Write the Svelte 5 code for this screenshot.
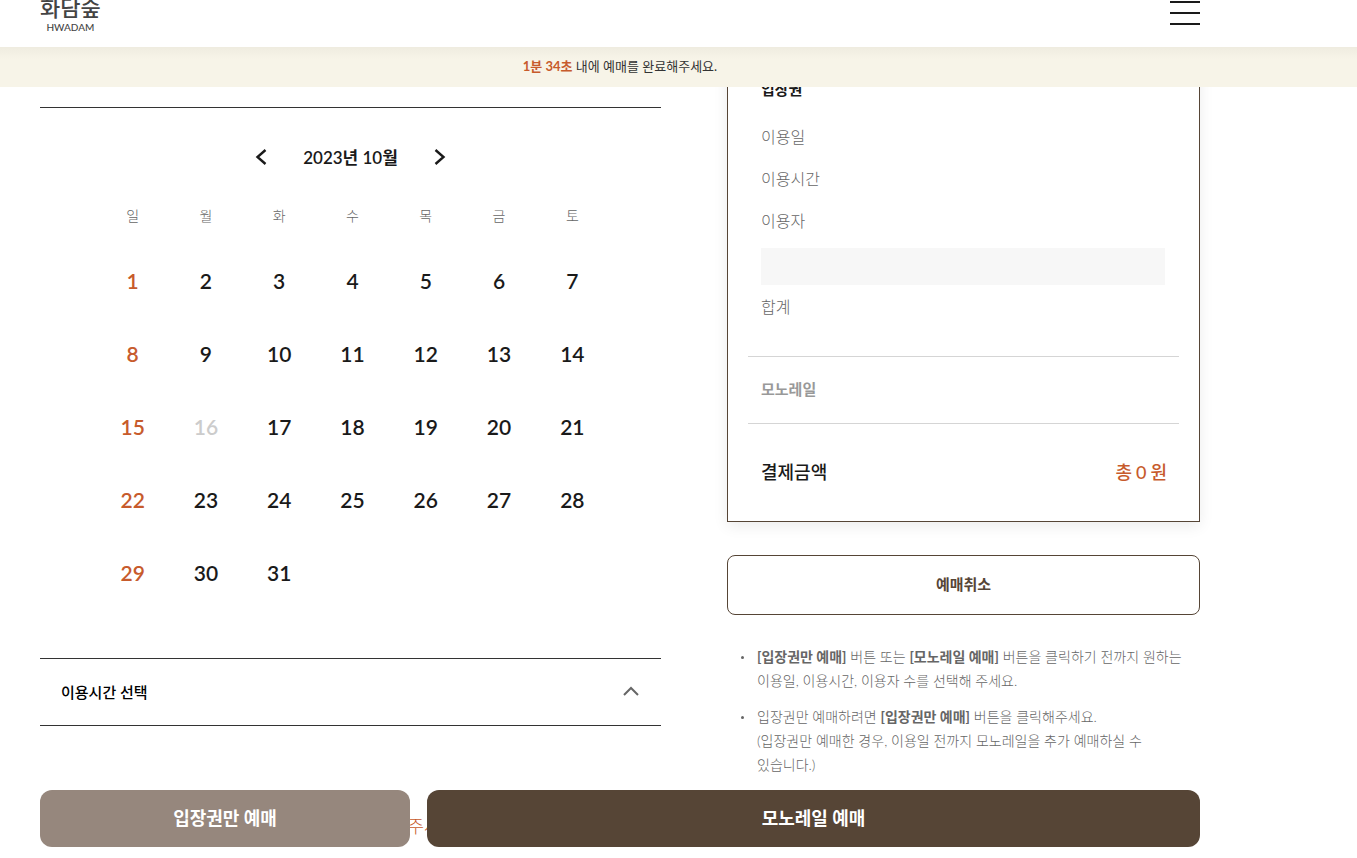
<script lang="ts">
  const weekdays = ["일", "월", "화", "수", "목", "금", "토"];
  const weeks = [0, 1, 2, 3, 4].map((week) =>
    weekdays.map((_, day) => {
      const date = week * 7 + day + 1;
      return date <= 31 ? date : null;
    }),
  );
  const closedDates = [16];
  const ticketRows = ["이용일", "이용시간", "이용자"];

  let selectedDate = $state<number | null>(null);
</script>

<div class="page">
  <header class="header">
    <div class="inner header-inner">
      <a class="logo" href="/" aria-label="화담숲 HWADAM">
        <span class="logo-ko">화담숲</span>
        <span class="logo-en">HWADAM</span>
      </a>
      <button class="menu" type="button" aria-label="메뉴">
        <span></span>
        <span></span>
        <span></span>
      </button>
    </div>
  </header>

  <div class="timer">
    <p class="inner"><strong>1분 34초</strong> 내에 예매를 완료해주세요.</p>
  </div>

  <main class="inner content">
    <div class="booking">
      <section class="calendar">
        <div class="month">
          <button type="button" aria-label="이전 달">
            <svg viewBox="0 0 12 18" width="12" height="18"><path d="M10.5 2 2.5 9l8 7" /></svg>
          </button>
          <h2>2023년 10월</h2>
          <button type="button" aria-label="다음 달">
            <svg viewBox="0 0 12 18" width="12" height="18"><path d="m1.5 2 8 7-8 7" /></svg>
          </button>
        </div>
        <table>
          <thead>
            <tr>
              {#each weekdays as day}
                <th scope="col">{day}</th>
              {/each}
            </tr>
          </thead>
          <tbody>
            {#each weeks as week}
              <tr>
                {#each week as date, i}
                  <td>
                    {#if date}
                      <button
                        class="date"
                        class:sunday={i === 0}
                        type="button"
                        aria-pressed={selectedDate === date}
                        disabled={closedDates.includes(date)}
                        onclick={() => (selectedDate = date)}
                      >
                        {date}
                      </button>
                    {/if}
                  </td>
                {/each}
              </tr>
            {/each}
          </tbody>
        </table>
      </section>

      <button class="accordion" type="button" aria-expanded="true">
        <span>이용시간 선택</span>
        <svg viewBox="0 0 16 10" width="16" height="10"><path d="m1 9 7-7 7 7" /></svg>
      </button>
      <p class="guide">이용일을 먼저 선택해 주세요.</p>
    </div>

    <aside>
      <section class="summary">
        <h3>입장권</h3>
        <dl>
          {#each ticketRows as label}
            <div class="row"><dt>{label}</dt><dd></dd></div>
          {/each}
        </dl>
        <div class="people"></div>
        <dl class="subtotal">
          <div class="row"><dt>합계</dt><dd></dd></div>
        </dl>
        <h3 class="monorail">모노레일</h3>
        <div class="total">
          <strong>결제금액</strong>
          <p class="price"><span>총</span><span>0</span><span>원</span></p>
        </div>
      </section>

      <button class="cancel" type="button">예매취소</button>

      <ul class="notes">
        <li>
          <b>[입장권만 예매]</b> 버튼 또는 <b>[모노레일 예매]</b> 버튼을 클릭하기 전까지 원하는
          이용일, 이용시간, 이용자 수를 선택해 주세요.
        </li>
        <li>
          입장권만 예매하려면 <b>[입장권만 예매]</b> 버튼을 클릭해주세요.<br />
          (입장권만 예매한 경우, 이용일 전까지 모노레일을 추가 예매하실 수 있습니다.)
        </li>
      </ul>
    </aside>
  </main>

  <div class="actions">
    <div class="inner actions-inner">
      <button class="ticket-only" type="button">입장권만 예매</button>
      <button class="with-monorail" type="button">모노레일 예매</button>
    </div>
  </div>
</div>

<style>
  :global(body) {
    margin: 0;
    background: #fff;
  }

  .page {
    height: 100vh;
    overflow: hidden;
    color: #1a1a1a;
    font-family: Lato, "Noto Sans CJK KR", sans-serif;
    font-size: 16px;
    word-break: keep-all;
  }

  .page * {
    box-sizing: border-box;
  }

  h2,
  h3,
  p,
  dl,
  dd,
  ul {
    margin: 0;
    padding: 0;
  }

  button {
    padding: 0;
    border: 0;
    background: none;
    color: inherit;
    font: inherit;
    cursor: pointer;
  }

  svg {
    display: block;
    fill: none;
    stroke: currentColor;
  }

  .inner {
    max-width: 1160px;
    margin: 0 40px;
  }

  .header {
    position: relative;
    height: 47px;
    background: #fff;
  }

  .header-inner {
    display: flex;
    justify-content: space-between;
    align-items: flex-start;
  }

  .logo {
    display: flex;
    flex-direction: column;
    align-items: center;
    margin-top: -5px;
    color: #444;
    text-decoration: none;
  }

  .logo-ko {
    font-size: 22px;
    font-weight: 500;
    line-height: 26px;
  }

  .logo-en {
    font-size: 10px;
    font-weight: 500;
    line-height: 12px;
  }

  .menu {
    display: flex;
    flex-direction: column;
    gap: 9px;
    width: 30px;
    padding-top: 1px;
  }

  .menu span {
    height: 2px;
    background: #1a1a1a;
  }

  .timer {
    position: relative;
    z-index: 2;
    padding-bottom: 2px;
    background: linear-gradient(#efece0, #f7f4e8 12px);
    color: #333;
    font-size: 13px;
    line-height: 38px;
    text-align: center;
  }

  .timer strong {
    color: #c75b2c;
  }

  .content {
    display: grid;
    grid-template-columns: 621fr 473fr;
    gap: 66px;
  }

  .calendar {
    margin-top: 20px;
    padding: 29px 52px 49px 56px;
    border-top: 1px solid #333;
  }

  .month {
    display: flex;
    justify-content: center;
    align-items: center;
    gap: 36px;
    height: 40px;
    margin-right: 4px;
  }

  .month svg {
    stroke-width: 2.4;
  }

  .month h2 {
    padding-bottom: 2px;
    font-size: 17px;
    font-weight: 600;
  }

  table {
    width: 100%;
    margin-top: 11px;
    border-collapse: collapse;
    table-layout: fixed;
  }

  th,
  td {
    padding: 0;
    text-align: center;
  }

  th {
    height: 56px;
    padding-bottom: 2px;
    color: #666;
    font-size: 14px;
    font-weight: 300;
  }

  td {
    height: 73px;
  }

  .date {
    width: 48px;
    height: 48px;
    font-size: 21px;
    font-weight: 600;
  }

  .date.sunday {
    color: #c75b2c;
  }

  .date:disabled {
    color: #ccc;
    cursor: default;
  }

  .accordion {
    display: flex;
    justify-content: space-between;
    align-items: center;
    width: 100%;
    height: 68px;
    padding: 0 22px 2px 21px;
    border: solid #333;
    border-width: 1px 0;
    color: #000;
    font-size: 15px;
    font-weight: 500;
  }

  .accordion svg {
    stroke: #666;
    stroke-width: 2;
  }

  .guide {
    margin-top: 86px;
    padding-left: 4px;
    color: #c75b2c;
    font-size: 18px;
    font-weight: 300;
    line-height: 28px;
    text-align: center;
  }

  .summary {
    margin-top: -26px;
    padding: 0 20px;
    border: 1px solid #564536;
    box-shadow: 0 4px 14px rgba(0, 0, 0, 0.08);
  }

  .summary h3 {
    padding: 0 13px;
    font-size: 15px;
    font-weight: 700;
    line-height: 54px;
  }

  .row {
    display: flex;
    padding: 0 13px;
    color: #666;
    font-weight: 300;
    line-height: 42px;
  }

  .people {
    height: 37px;
    margin: 6px 14px 1px 13px;
    background: #f7f7f7;
  }

  .subtotal {
    padding-bottom: 28px;
  }

  .summary .monorail {
    padding-bottom: 2px;
    border: solid #d5d5d5;
    border-width: 1px 0;
    color: #999;
    line-height: 64px;
  }

  .total {
    display: flex;
    justify-content: space-between;
    align-items: center;
    height: 97px;
    padding: 0 12px 4px 13px;
    font-size: 18px;
  }

  .total strong {
    font-weight: 500;
  }

  .price {
    display: flex;
    align-items: baseline;
    gap: 4px;
    color: #c75b2c;
    font-weight: 500;
  }

  .cancel {
    width: 100%;
    height: 60px;
    margin-top: 33px;
    padding-bottom: 4px;
    border: 1px solid #564536;
    border-radius: 8px;
    color: #564536;
    font-size: 15px;
    font-weight: 700;
  }

  .notes {
    display: grid;
    gap: 12px;
    margin-top: 30px;
    padding: 0 9px 0 30px;
    color: #666;
    font-size: 14px;
    font-weight: 300;
    line-height: 24px;
    list-style: none;
  }

  .notes li {
    position: relative;
  }

  .notes li::before {
    content: "";
    position: absolute;
    top: 11px;
    left: -16px;
    width: 3px;
    height: 3px;
    border-radius: 50%;
    background: #666;
  }

  .notes b {
    font-weight: 700;
  }

  .actions {
    position: fixed;
    right: 0;
    bottom: 11px;
    left: 0;
    z-index: 4;
  }

  .actions-inner {
    display: grid;
    grid-template-columns: 370fr 773fr;
    gap: 17px;
  }

  .actions button {
    height: 57px;
    padding-bottom: 4px;
    border-radius: 12px;
    color: #fff;
    font-size: 18px;
    font-weight: 700;
  }

  .ticket-only {
    background: #96877d;
  }

  .with-monorail {
    background: #564536;
  }
</style>
